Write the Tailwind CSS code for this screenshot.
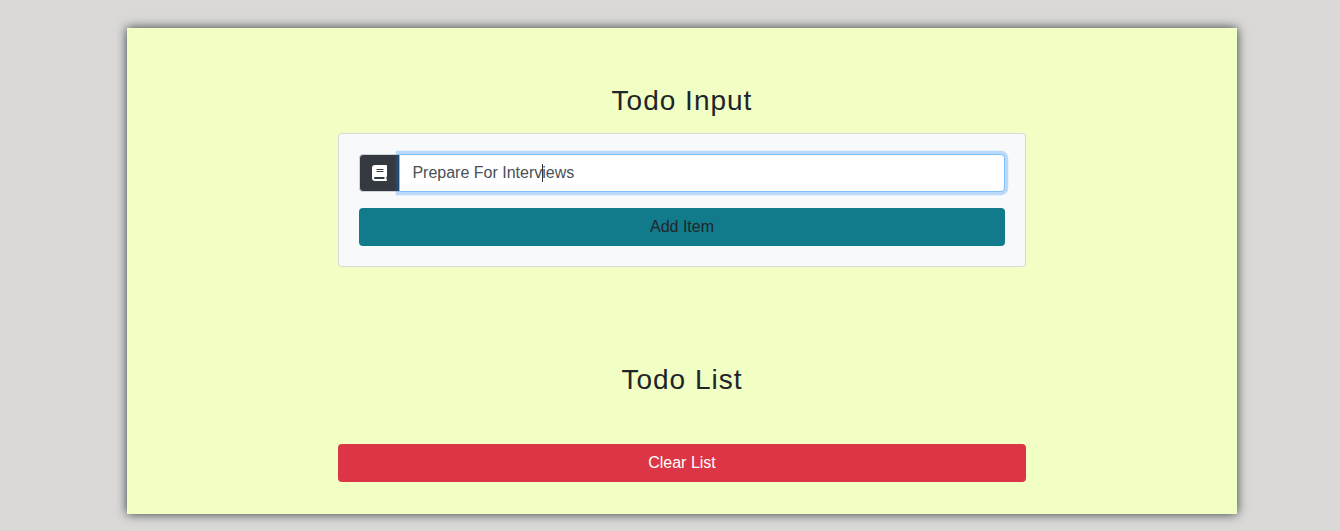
<!DOCTYPE html>
<html lang="en">
<head>
<meta charset="utf-8">
<title>Todo</title>
<script src="https://cdn.jsdelivr.net/npm/@tailwindcss/browser@4"></script>
</head>
<body class="h-[531px] overflow-hidden bg-[#dad9d7] pt-7 pl-[127px] font-['Liberation_Sans',Arial,sans-serif] text-base leading-6 text-[#212529]">
<main class="flex h-[486px] w-[1110px] flex-col items-center bg-[#f1ffc4] pt-14 shadow-[0_0_10px_#343a40]">
  <h1 class="text-[28px] leading-[33.6px] tracking-[1px]">Todo Input</h1>
  <form class="mt-[15.4px] w-[688px] rounded border border-black/12.5 bg-[#f8f9fa] p-5">
    <div class="flex h-[38px]">
      <span class="flex w-[41px] items-center justify-center rounded-l border border-[#ced4da] bg-[#343a40] text-white">
        <svg class="h-4 w-[15px]" preserveAspectRatio="none" viewBox="0 0 15 16" fill="currentColor" fill-rule="evenodd"><path d="M3 0H14Q15 0 15 1V11Q15 11.700 14.400 12V14Q15 14.200 15 15Q15 16 14 16H3Q0 16 0 13V3Q0 0 3 0ZM4.500 4V5H11.500V4ZM4.500 6V7H11.500V6ZM3 12Q2 12 2 13Q2 14 3 14H12.500V12Z"/></svg>
      </span>
      <div class="relative -ml-px flex flex-1 items-center rounded-r border border-[#80bdff] bg-white px-3 text-[#495057] shadow-[0_0_0_3.2px_rgba(0,123,255,.25)]"><span class="ml-[.4px]">Prepare For Interviews</span><span class="absolute top-[9px] left-[142px] h-[18px] w-px bg-[#333]"></span></div>
    </div>
    <button type="button" class="mt-4 block h-[38px] w-full rounded bg-[#117a8b]">Add Item</button>
  </form>
  <h2 class="mt-[95.600px] text-[28px] leading-[33.6px] tracking-[1px]">Todo List</h2>
  <button type="button" class="mt-[47.400px] block h-[38px] w-[688px] rounded bg-[#dc3545] text-white">Clear List</button>
</main>
</body>
</html>
